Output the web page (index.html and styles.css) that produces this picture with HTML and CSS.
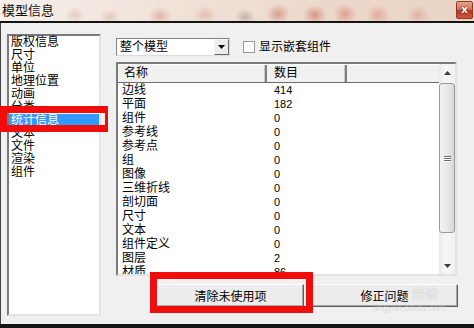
FILE: index.html
```html
<!DOCTYPE html>
<html>
<head>
<meta charset="utf-8">
<title>模型信息</title>
<link rel="stylesheet" href="styles.css">
</head>
<body>
<div class="window">
  <div class="titlebar">
    <span class="title">模型信息</span>
    <span class="close">x</span>
  </div>
  <div class="content">
    <ul class="sidebar">
      <li>版权信息</li>
      <li>尺寸</li>
      <li>单位</li>
      <li>地理位置</li>
      <li>动画</li>
      <li>分类</li>
      <li class="selected">统计信息</li>
      <li>文本</li>
      <li>文件</li>
      <li>渲染</li>
      <li>组件</li>
    </ul>
    <div class="main">
      <div class="toolbar">
        <div class="combo">
          <span class="combo-text">整个模型</span>
          <span class="combo-btn"><svg width="7" height="4" viewBox="0 0 7 4"><path d="M0 0H7L3.5 4Z" fill="#000"/></svg></span>
        </div>
        <label class="check"><span class="box"></span>显示嵌套组件</label>
      </div>
      <div class="listview">
        <div class="lv-body">
          <div class="lv-header">
            <span class="h1">名称</span><span class="h2">数目</span><span class="h3"></span>
          </div>
          <div class="lv-rows">
            <div class="row"><span class="c1">边线</span><span class="c2">414</span></div>
            <div class="row"><span class="c1">平面</span><span class="c2">182</span></div>
            <div class="row"><span class="c1">组件</span><span class="c2">0</span></div>
            <div class="row"><span class="c1">参考线</span><span class="c2">0</span></div>
            <div class="row"><span class="c1">参考点</span><span class="c2">0</span></div>
            <div class="row"><span class="c1">组</span><span class="c2">0</span></div>
            <div class="row"><span class="c1">图像</span><span class="c2">0</span></div>
            <div class="row"><span class="c1">三维折线</span><span class="c2">0</span></div>
            <div class="row"><span class="c1">剖切面</span><span class="c2">0</span></div>
            <div class="row"><span class="c1">尺寸</span><span class="c2">0</span></div>
            <div class="row"><span class="c1">文本</span><span class="c2">0</span></div>
            <div class="row"><span class="c1">组件定义</span><span class="c2">0</span></div>
            <div class="row"><span class="c1">图层</span><span class="c2">2</span></div>
            <div class="row"><span class="c1">材质</span><span class="c2">86</span></div>
          </div>
        </div>
        <div class="scrollbar">
          <div class="sb-arrow"><svg width="7" height="4" viewBox="0 0 7 4"><path d="M3.5 0L7 4H0Z" fill="#3c3c3c"/></svg></div>
          <div class="sb-thumb"><span class="grip"></span><span class="grip"></span><span class="grip"></span></div>
          <div class="sb-track"></div>
          <div class="sb-arrow"><svg width="7" height="4" viewBox="0 0 7 4"><path d="M0 0H7L3.5 4Z" fill="#3c3c3c"/></svg></div>
        </div>
      </div>
      <div class="buttons">
        <button class="btn">清除未使用项</button>
        <button class="btn">修正问题</button>
      </div>
    </div>
  </div>
  <div class="bottom-edge"></div>
  <div class="mark mark-list"></div>
  <div class="mark mark-btn"></div>
  <div class="watermark"><span class="wm-big">经验</span><span class="wm-small">jingyan.baidu.com</span></div>
</div>
</body>
</html>
```
FILE: styles.css
```css
* { box-sizing: border-box; }
html, body { margin: 0; padding: 0; }
body {
  font-family: "Liberation Sans", "Noto Sans CJK SC", sans-serif;
  font-size: 12px;
  color: #000;
  background: #f0f0f0;
}
.window {
  position: relative;
  width: 474px;
  height: 328px;
  overflow: hidden;
  background: #f0f0f0;
}
.titlebar {
  height: 23px;
  border-bottom: 2px solid #151515;
  display: flex;
  justify-content: space-between;
  align-items: flex-start;
  background:
    radial-gradient(ellipse 10px 8px at 75px 15px, rgba(200,150,135,.35), transparent),
    radial-gradient(ellipse 10px 8px at 110px 17px, rgba(200,140,125,.35), transparent),
    radial-gradient(ellipse 12px 9px at 160px 16px, rgba(195,120,105,.4), transparent),
    radial-gradient(ellipse 12px 9px at 205px 15px, rgba(200,130,115,.35), transparent),
    radial-gradient(ellipse 10px 8px at 245px 17px, rgba(120,100,90,.35), transparent),
    radial-gradient(ellipse 12px 10px at 278px 14px, rgba(195,100,90,.5), transparent),
    radial-gradient(ellipse 12px 10px at 315px 15px, rgba(200,95,85,.55), transparent),
    radial-gradient(ellipse 12px 10px at 345px 14px, rgba(200,105,95,.5), transparent),
    radial-gradient(ellipse 12px 10px at 378px 15px, rgba(205,120,110,.45), transparent),
    radial-gradient(ellipse 12px 10px at 418px 15px, rgba(205,130,120,.4), transparent),
    linear-gradient(90deg, #f7f0ec 0%, #f0e2d8 35%, #ecd8ca 70%, #ead4c4 100%);
}
.title {
  padding-left: 2px;
  font-size: 13px;
  line-height: 21px;
  color: #111;
}
.close {
  width: 17px;
  height: 18px;
  margin: 1px 1px 0 0;
  border: 1px solid #8a3b2b;
  border-radius: 2px;
  background: linear-gradient(#e9a58c 0%, #d9705a 45%, #b8341f 55%, #d2583e 100%);
  color: #fff;
  font-family: "DejaVu Sans", sans-serif;
  font-weight: bold;
  font-size: 11px;
  line-height: 15px;
  text-align: center;
  text-shadow: 0 0 1px #300, 0 0 1px #300;
}
.content {
  height: 301px;
  display: flex;
  align-items: flex-start;
  padding: 11px 0 0 7px;
  border-left: 1px solid #444;
}
.sidebar {
  list-style: none;
  margin: 0 0 0 -1px;
  padding: 0;
  width: 94px;
  height: 282px;
  background: #fff;
  border: 2px solid;
  border-color: #7a7a7a #e3e3e3 #e3e3e3 #7a7a7a;
  font-size: 12px;
  line-height: 13px;
}
.sidebar li {
  height: 13px;
  padding-left: 2px;
  white-space: nowrap;
}
.sidebar li.selected {
  background: #3399ff;
  color: #fff;
}
.main {
  margin-left: 15px;
  width: 342px;
  display: flex;
  flex-direction: column;
}
.toolbar {
  margin-top: 4px;
  height: 18px;
  display: flex;
  align-items: center;
}
.combo {
  width: 114px;
  height: 18px;
  background: #fff;
  border: 1px solid;
  border-color: #828282 #dcdcdc #dcdcdc #828282;
  display: flex;
  align-items: center;
  justify-content: space-between;
}
.combo-text {
  padding-left: 3px;
  line-height: 16px;
}
.combo-btn {
  width: 15px;
  height: 16px;
  background: #ececec;
  border: 1px solid;
  border-color: #f8f8f8 #6a6a6a #6a6a6a #f8f8f8;
  display: flex;
  align-items: center;
  justify-content: center;
}
.check {
  margin-left: 13px;
  display: flex;
  align-items: center;
  line-height: 16px;
}
.check .box {
  width: 12px;
  height: 12px;
  margin-right: 4px;
  background: #fbfbfb;
  border: 1px solid #9a9a9a;
}
.listview {
  margin-top: 6px;
  width: 341px;
  height: 214px;
  background: #fff;
  border: 2px solid;
  border-color: #7a7a7a #e3e3e3 #e3e3e3 #7a7a7a;
  display: flex;
}
.lv-body {
  flex: 1;
  overflow: hidden;
}
.lv-header {
  height: 19px;
  display: flex;
  background: #f0f0f0;
  border-top: 1px solid #fff;
  border-bottom: 1px solid #6e6e6e;
}
.lv-header span {
  display: block;
  height: 17px;
  line-height: 17px;
  border-right: 2px solid;
  border-right-color: #7e7e7e;
  box-shadow: inset -1px 0 0 #c8c8c8;
}
.h1 { width: 149px; padding-left: 6px; }
.h2 { width: 80px; padding-left: 7px; }
.h3 { flex: 1; border-right: none !important; box-shadow: none !important; }
.row {
  height: 14px;
  line-height: 14px;
  display: flex;
  white-space: nowrap;
}
.c1 { width: 149px; padding-left: 4px; }
.c2 { width: 80px; padding-left: 7px; font-size: 11px; }
.scrollbar {
  width: 16px;
  display: flex;
  flex-direction: column;
  background: linear-gradient(90deg, #eaeaea, #f6f6f6 40%, #f2f2f2);
}
.sb-arrow {
  height: 17px;
  display: flex;
  align-items: center;
  justify-content: center;
}
.sb-thumb {
  margin-top: 2px;
  height: 150px;
  border: 1px solid #9b9b9b;
  border-radius: 3px;
  background: linear-gradient(90deg, #f2f2f2 0%, #e8e8e8 50%, #d6d6d6 100%);
  display: flex;
  flex-direction: column;
  align-items: center;
  justify-content: center;
  gap: 1px;
}
.grip {
  display: block;
  width: 7px;
  height: 1px;
  background: #6a6a6a;
  box-shadow: 0 1px 0 #fff;
}
.sb-track { flex: 1; }
.buttons {
  margin-top: 8px;
  padding-left: 41px;
  display: flex;
  gap: 7px;
}
.btn {
  width: 147px;
  height: 23px;
  padding: 0;
  font-family: "Liberation Sans", "Noto Sans CJK SC", sans-serif;
  font-size: 12px;
  color: #000;
  background: #ececec;
  border: 1px solid;
  border-color: #fdfdfd #5e5e5e #5e5e5e #fdfdfd;
  box-shadow: inset -1px -1px 0 #a8a8a8;
}
.bottom-edge {
  height: 4px;
  background: #151515;
}
.mark {
  position: absolute;
  border: 7px solid #f20d0d;
}
.mark-list {
  left: 0;
  top: 106px;
  width: 108px;
  height: 26px;
  border-right-width: 3px;
}
.mark-btn {
  left: 150px;
  top: 272px;
  width: 163px;
  height: 41px;
}
.watermark {
  position: absolute;
  left: 360px;
  top: 286px;
  width: 90px;
  display: flex;
  flex-direction: column;
  align-items: flex-end;
  pointer-events: none;
}
.wm-big {
  font-size: 13px;
  line-height: 16px;
  margin-right: 12px;
  color: rgba(255,255,255,.75);
  text-shadow: 0 0 1px #aaa;
}
.wm-small {
  font-size: 9px;
  line-height: 12px;
  color: rgba(200,200,200,.55);
  margin-right: 4px;
}
```
